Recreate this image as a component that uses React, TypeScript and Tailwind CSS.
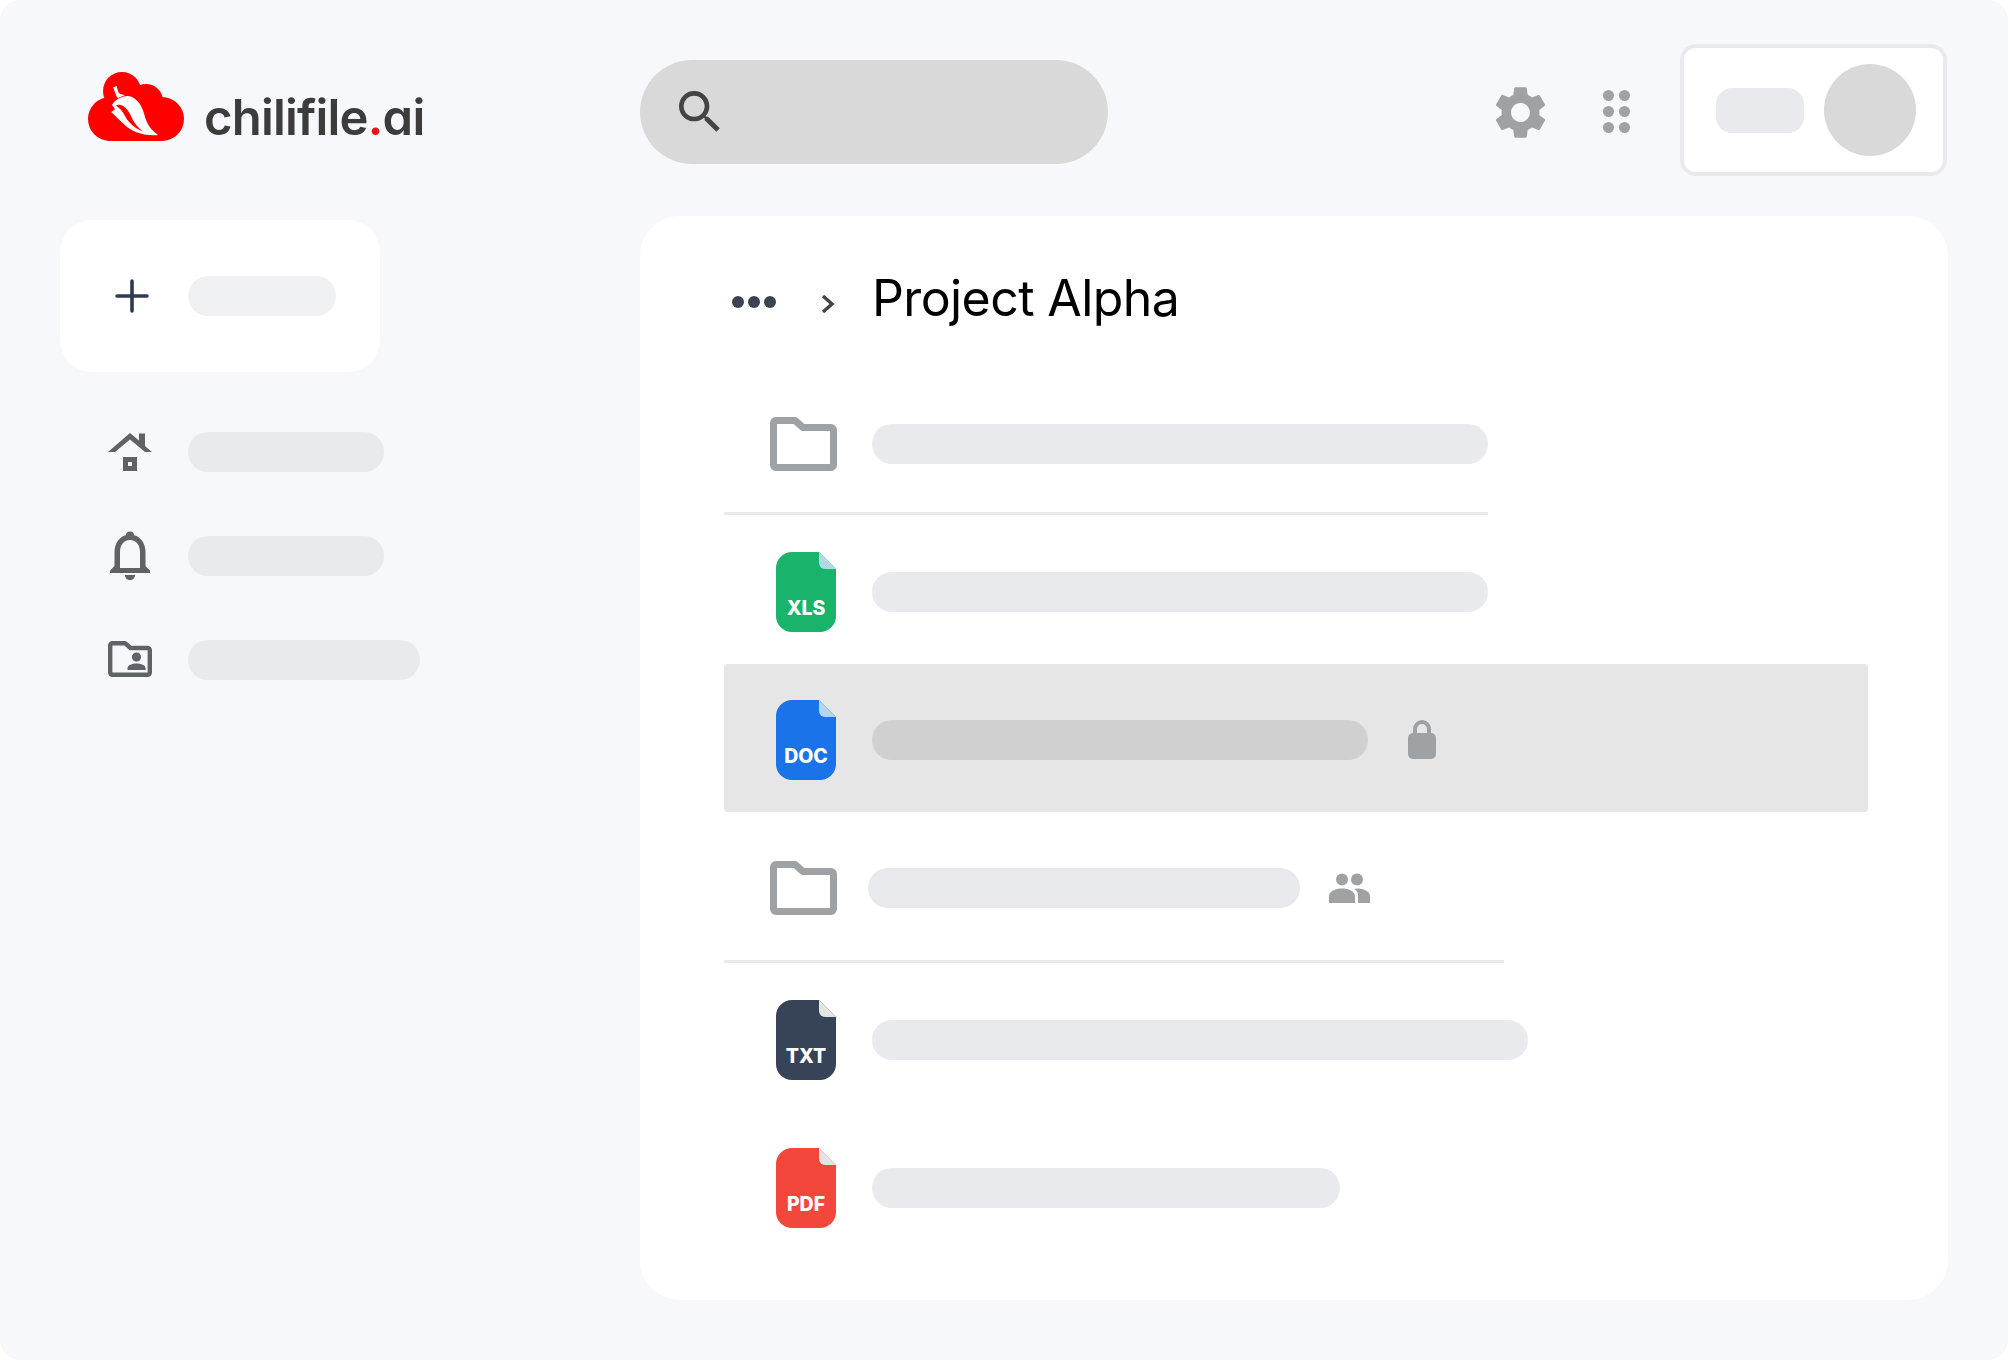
import React from 'react';
import { MdSearch, MdSettings } from 'react-icons/md';

const FONT = "font-['Inter','Liberation_Sans',sans-serif]";

function Logo() {
  return (
    <div className="flex items-start">
      <svg width="96" height="69" viewBox="8 12 96 69" className="shrink-0">
        <g fill="#ff0000">
          <circle cx="42" cy="31" r="19" />
          <circle cx="66" cy="41" r="17" />
          <circle cx="30" cy="59" r="22" />
          <circle cx="82" cy="59" r="22" />
          <rect x="28" y="35" width="54" height="46" />
        </g>
        <path d="M33 27.5 L36.5 26 L38.5 32.5 C40 34.5 43 34.5 45 35 L38 38 C35.5 36 35.5 32 33 27.5 Z" fill="#fff" />
        <path d="M32 45 C36 38 46 34 52 37 C60 41 63 49 65 57 C67 64 71 70 78 75 C66 76 55 73 47 67 C41 62 36 56 31 52 C33 51 34 50 35 49 C34 48 33 46 32 45 Z" fill="#fff" />
        <path d="M36 45.5 C42 42.5 48 49 51 56 C54 63 58 68 63 71.5 C54 68 48 62 45 56 C43 52 40 48 36 45.5 Z" fill="#ff0000" />
      </svg>
      <div className="ml-[20px] mt-[14px] text-[49px] leading-[64px] font-semibold tracking-[-0.8px] text-[#3c3c3c] [font-feature-settings:'cv11']">
        chilifile<span className="text-[#e8141c]">.</span>ai
      </div>
    </div>
  );
}

function HomeIcon() {
  return (
    <svg width="44" height="40" viewBox="0 0 44 40" fill="#5f6368">
      <path d="M0 20 L22 1 L31 8.5 V1.5 H37 V14 L44 20 H37 L22 7.5 L7 20 Z" />
      <path fillRule="evenodd" d="M15 25 H29 V39 H15 Z M20 30 V34 H24 V30 Z" />
    </svg>
  );
}

function BellIcon() {
  return (
    <svg width="40" height="49" viewBox="0 0 40 49" fill="#5f6368">
      <circle cx="20" cy="4.5" r="4" />
      <path fillRule="evenodd" d="M20 3.5 C30 3.5 35.5 12 35.5 21 V35 L40 39.5 V42 H0 V39.5 L4.5 35 V21 C4.5 12 10 3.5 20 3.5 Z M20 9 C13.5 9 10 14 10 21 V37 H30 V21 C30 14 26.5 9 20 9 Z" />
      <path d="M15 44 H25 C25 47 23 49 20 49 C17 49 15 47 15 44 Z" />
    </svg>
  );
}

function SharedFolderIcon() {
  return (
    <svg width="44" height="36" viewBox="0 0 44 36" fill="#5f6368">
      <path d="M4.5 2.2 H17 L22.5 7 H39.5 A2.3 2.3 0 0 1 41.8 9.3 V31.5 A2.3 2.3 0 0 1 39.5 33.8 H4.5 A2.3 2.3 0 0 1 2.2 31.5 V4.5 A2.3 2.3 0 0 1 4.5 2.2 Z" fill="none" stroke="#5f6368" strokeWidth="4.4" strokeLinejoin="round" />
      <circle cx="28.5" cy="16" r="4.6" />
      <path d="M19.5 29 V27 C19.5 24 24 22.5 28.5 22.5 C33 22.5 37.5 24 37.5 27 V29 Z" />
    </svg>
  );
}

function FolderIcon() {
  return (
    <svg width="67" height="54" viewBox="0 0 67 54" className="shrink-0">
      <path d="M6 3.5 H25 L33 10.5 H61 A2.5 2.5 0 0 1 63.5 13 V48 A2.5 2.5 0 0 1 61 50.5 H6 A2.5 2.5 0 0 1 3.5 48 V6 A2.5 2.5 0 0 1 6 3.5 Z" fill="none" stroke="#9ea2a5" strokeWidth="7" strokeLinejoin="round" />
    </svg>
  );
}

function FileIcon({ label, color, fold, className = '' }: { label: string; color: string; fold: string; className?: string }) {
  return (
    <div className={`relative w-[60px] h-[80px] ml-[6px] shrink-0 ${className}`}>
      <svg width="60" height="80" viewBox="0 0 60 80">
        <path d="M16 0 H43 L60 17 V64 A16 16 0 0 1 44 80 H16 A16 16 0 0 1 0 64 V16 A16 16 0 0 1 16 0 Z" fill={color} />
        <path d="M43 0 L60 17 H49 A6 6 0 0 1 43 11 Z" fill={fold} />
      </svg>
      <div className="absolute inset-x-0 top-[43.5px] text-center text-[19.5px] leading-[24px] font-extrabold text-white">{label}</div>
    </div>
  );
}

function Pill({ width, color = 'bg-[#e9eaee]' }: { width: string; color?: string }) {
  return <div className={`h-10 rounded-full ${width} ${color}`} />;
}

function NavRow({ icon, width }: { icon: React.ReactNode; width: string }) {
  return (
    <div className="flex items-center h-[104px]">
      <div className="flex justify-center w-[44px] ml-[108px] mr-[36px]">{icon}</div>
      <Pill width={width} />
    </div>
  );
}

function Row({ className, icon, children }: { className: string; icon: React.ReactNode; children: React.ReactNode }) {
  return (
    <div className={`flex items-center ${className}`}>
      <div className="flex justify-center w-[148px] pl-[10px]">{icon}</div>
      {children}
    </div>
  );
}

export default function App() {
  return (
    <div className={`h-[1360px] bg-white ${FONT}`}>
      <div className="h-full rounded-[20px] bg-[#f7f8fc] pt-[44px]">
        {/* Top bar */}
        <header className="flex items-start h-[172px]">
          <div className="w-[640px] pl-[88px] pt-[28px] shrink-0">
            <Logo />
          </div>
          <div className="flex items-center w-[468px] h-[104px] mt-[16px] pl-[32px] rounded-full bg-[#d9d9d9]">
            <MdSearch size={56} className="text-[#444444]" />
          </div>
          <div className="flex items-center justify-center w-[60px] h-[60px] mt-[38px] ml-[382px]">
            <MdSettings size={63} className="text-[#9ea2a5] shrink-0" />
          </div>
          <div className="grid grid-cols-2 gap-x-[5px] gap-y-[5px] mt-[46px] ml-[53px]">
            {[0, 1, 2, 3, 4, 5].map((i) => (
              <div key={i} className="w-[11px] h-[11px] rounded-full bg-[#9ea2a5]" />
            ))}
          </div>
          <div className="flex items-center w-[267px] h-[132px] ml-[50px] pl-[32px] rounded-2xl border-4 border-[#e9eaee] bg-white">
            <div className="w-[88px] h-[45px] rounded-2xl bg-[#e9eaee]" />
            <div className="w-[92px] h-[92px] ml-[20px] rounded-full bg-[#d9d9d9]" />
          </div>
        </header>

        <div className="flex">
          {/* Sidebar */}
          <aside className="w-[640px] shrink-0">
            <div className="flex items-center w-[320px] h-[152px] ml-[60px] mt-[4px] rounded-[32px] bg-white">
              <svg width="34" height="34" viewBox="0 0 34 34" className="ml-[55px] mr-[39px]" stroke="#2f3a50" strokeWidth="3.6" strokeLinecap="round">
                <path d="M17 2 V32 M2 17 H32" />
              </svg>
              <Pill width="w-[148px]" color="bg-[#f0f1f3]" />
            </div>
            <div className="mt-[28px]">
              <NavRow icon={<HomeIcon />} width="w-[196px]" />
              <NavRow icon={<div className="-mt-[2px]"><BellIcon /></div>} width="w-[196px]" />
              <NavRow icon={<div className="-mt-[2px]"><SharedFolderIcon /></div>} width="w-[232px]" />
            </div>
          </aside>

          {/* File list */}
          <main className="w-[1308px] h-[1084px] rounded-[40px] bg-white pl-[84px] pr-[80px]">
            <div className="flex items-center h-[160px]">
              <div className="flex gap-[4px] ml-[8px] mt-[12px]">
                <div className="w-[12px] h-[12px] rounded-full bg-[#3c4250]" />
                <div className="w-[12px] h-[12px] rounded-full bg-[#3c4250]" />
                <div className="w-[12px] h-[12px] rounded-full bg-[#3c4250]" />
              </div>
              <svg width="14" height="20" viewBox="0 0 14 20" className="ml-[45px] mt-[16px]" fill="none" stroke="#444444" strokeWidth="3.4">
                <path d="M2 2 L11 10 L2 18" />
              </svg>
              <h1 className="ml-[37px] mt-[4px] text-[50px] leading-[60px] font-normal tracking-[-0.6px] text-black">Project Alpha</h1>
            </div>

            <Row className="h-[136px]" icon={<FolderIcon />}>
              <Pill width="w-[616px]" />
            </Row>
            <div className="w-[764px] h-[3px] bg-[#e9eaee]" />
            <Row className="h-[144px] mt-[5px]" icon={<FileIcon label="XLS" color="#19b36b" fold="#b0d9e4" />}>
              <Pill width="w-[616px]" />
            </Row>
            <Row className="h-[148px] pt-[3px] rounded-[3px] bg-[#e6e6e6]" icon={<FileIcon label="DOC" color="#1a73e8" fold="#b6d4ee" className="mt-[1px]" />}>
              <Pill width="w-[496px]" color="bg-[#d0d0d0]" />
              <svg width="28" height="40" viewBox="0 0 28 40" className="ml-[40px] -mt-[1px]" fill="#9ea2a5">
                <path d="M7 17 V10 A7 7 0 0 1 21 10 V17" fill="none" stroke="#9ea2a5" strokeWidth="4" />
                <rect x="0" y="14" width="28" height="26" rx="5" />
              </svg>
            </Row>
            <Row className="h-[144px] mt-[4px]" icon={<FolderIcon />}>
              <div className="-ml-[4px]">
                <Pill width="w-[432px]" />
              </div>
              <svg width="41" height="30" viewBox="0 0 41 30" className="ml-[29px]" fill="#9ea2a5">
                <circle cx="13" cy="6.5" r="6" />
                <circle cx="28" cy="6.5" r="6" />
                <path d="M0 30 V23 C0 18 7 15.5 13 15.5 C19 15.5 26 18 26 23 V30 Z" />
                <path d="M28 15.5 C34 15.5 41 18 41 23 V30 H29 V22 C29 19 27 17 25 16 Z" />
              </svg>
            </Row>
            <div className="w-[780px] h-[3px] bg-[#e9eaee]" />
            <Row className="h-[148px] mt-[3px]" icon={<FileIcon label="TXT" color="#374357" fold="#e4e4e4" />}>
              <Pill width="w-[656px]" />
            </Row>
            <Row className="h-[148px]" icon={<FileIcon label="PDF" color="#f4473b" fold="#e4e4e4" />}>
              <Pill width="w-[468px]" />
            </Row>
          </main>
        </div>
      </div>
    </div>
  );
}
